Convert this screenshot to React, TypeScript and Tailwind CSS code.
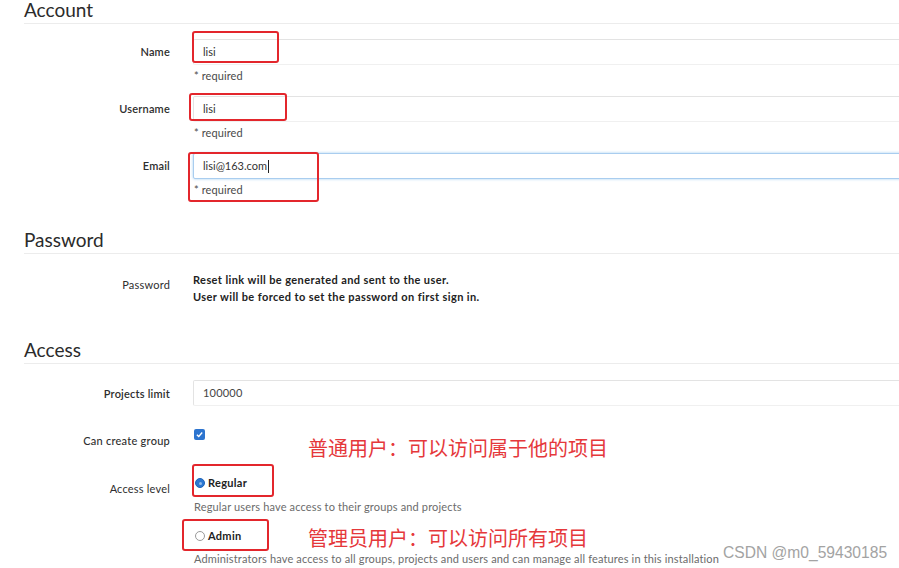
import React from 'react'

const labelCls = 'w-[146px] shrink-0 text-right text-[11px] leading-[16px] text-[#2e2e2e]'

function Heading({ title, className = '' }: { title: string; className?: string }) {
  return (
    <h3
      className={`pb-[3px] border-b border-[#ececec] text-[19px] leading-[20px] font-normal text-[#2b2b2b] ${className}`}
    >
      {title}
    </h3>
  )
}

function TextRow({
  label,
  value,
  focused = false,
  className = '',
}: {
  label: string
  value: string
  focused?: boolean
  className?: string
}) {
  return (
    <div className={`flex ${className}`}>
      <label className={`${labelCls} pt-[5px] font-semibold tracking-[0.2px]`}>{label}</label>
      <div className="flex-1 pl-[23px]">
        <div
          className={`h-[26px] flex items-center pl-[9px] rounded-[2px] bg-white text-[11px] text-[#333] ${
            focused
              ? 'border border-[#a9cdef] shadow-[0_0_3px_rgba(102,175,233,0.6)]'
              : 'border border-[#e3e3e3] border-b-[#f0f0f0]'
          }`}
        >
          {value}
          {focused && <span className="ml-[1px] inline-block w-px h-[13px] bg-[#222]" />}
        </div>
        <div className="mt-[4px] pl-[1px] text-[11px] leading-[14px] tracking-[0.1px] text-[#4a4a4a]">* required</div>
      </div>
    </div>
  )
}

function Radio({ checked }: { checked: boolean }) {
  return checked ? (
    <span className="inline-flex w-[10px] h-[10px] rounded-full bg-[#2c77d1] border border-[#1f64b8] items-center justify-center">
      <span className="w-[3px] h-[3px] rounded-full bg-[#8fb9ea]" />
    </span>
  ) : (
    <span className="inline-block w-[10px] h-[10px] rounded-full border border-[#9a9a9a] bg-white" />
  )
}

export default function App() {
  return (
    <div className="relative w-[899px] h-[568px] overflow-hidden bg-white font-['Lato','Liberation_Sans',sans-serif]">
      <div className="w-[980px] pl-[24px] pt-[1px]">
        {/* Account */}
        <Heading title="Account" className="-mt-[1px]" />
        <TextRow label="Name" value="lisi" className="mt-[15px]" />
        <TextRow label="Username" value="lisi" className="mt-[13px]" />
        <TextRow label="Email" value="lisi@163.com" focused className="mt-[13px]" />

        {/* Password */}
        <Heading title="Password" className="mt-[33px]" />
        <div className="flex mt-[18px]">
          <label className={`${labelCls} pt-[5px] tracking-[0.2px]`}>Password</label>
          <div className="pl-[23px] text-[11px] leading-[16.5px] font-bold tracking-[0.4px] text-[#222]">
            <p>Reset link will be generated and sent to the user.</p>
            <p>User will be forced to set the password on first sign in.</p>
          </div>
        </div>

        {/* Access */}
        <Heading title="Access" className="mt-[35px]" />
        <div className="flex mt-[16px]">
          <label className={`${labelCls} pt-[6px] font-semibold tracking-[0.2px]`}>Projects limit</label>
          <div className="flex-1 pl-[23px]">
            <div className="h-[26px] flex items-center pl-[9px] rounded-[2px] border border-[#e3e3e3] border-b-[#f0f0f0] bg-white text-[11px] tracking-[0.2px] text-[#444]">
              100000
            </div>
          </div>
        </div>

        <div className="flex mt-[14px]">
          <label className={`${labelCls} pt-[13px] font-medium tracking-[0.25px]`}>Can create group</label>
          <div className="pl-[24px] pt-[9px]">
            <span className="flex w-[11px] h-[11px] rounded-[2px] bg-[#2c74cf] items-center justify-center">
              <svg viewBox="0 0 12 12" className="w-[9px] h-[9px]">
                <path d="M2.5 6.2 L5 8.6 L9.6 3.4" fill="none" stroke="#fff" strokeWidth="1.8" />
              </svg>
            </span>
          </div>
        </div>

        <div className="flex mt-[25px]">
          <label className={`${labelCls} pt-[7px] tracking-[0.2px]`}>Access level</label>
          <div className="pl-[24px]">
            <div className="flex items-center h-[18px] gap-[3px] pl-[1px]">
              <Radio checked />
              <span className="text-[11px] font-bold tracking-[0.3px] text-[#222]">Regular</span>
            </div>
            <div className="mt-[8px] text-[11px] leading-[14px] tracking-[0.15px] text-[#6b6b6b]">
              Regular users have access to their groups and projects
            </div>
            <div className="mt-[13px] flex items-center h-[18px] gap-[3px] pl-[1px]">
              <Radio checked={false} />
              <span className="text-[11px] font-bold tracking-[0.3px] text-[#222]">Admin</span>
            </div>
            <div className="mt-[7px] text-[11px] leading-[14px] tracking-[0.15px] text-[#6b6b6b] whitespace-nowrap">
              Administrators have access to all groups, projects and users and can manage all features in this installation
            </div>
          </div>
        </div>
      </div>

      {/* annotations */}
      <div className="absolute left-[192px] top-[31px] w-[87px] h-[32px] border-[2.5px] border-[#e3262c] rounded-[3px]" />
      <div className="absolute left-[189px] top-[93px] w-[98px] h-[28px] border-[2.5px] border-[#e3262c] rounded-[3px]" />
      <div className="absolute left-[188px] top-[152px] w-[131px] h-[50px] border-[2.5px] border-[#e3262c] rounded-[3px]" />
      <div className="absolute left-[192px] top-[464px] w-[82px] h-[33px] border-[2.5px] border-[#e3262c] rounded-[3px]" />
      <div className="absolute left-[182px] top-[519px] w-[87px] h-[32px] border-[2.5px] border-[#e3262c] rounded-[3px]" />

      <div className="absolute left-[308px] top-[436px] text-[20px] leading-[24px] text-[#e5383b] font-['Noto_Sans_CJK_SC',sans-serif]">
        普通用户：可以访问属于他的项目
      </div>
      <div className="absolute left-[308px] top-[526px] text-[20px] leading-[24px] text-[#e5383b] font-['Noto_Sans_CJK_SC',sans-serif]">
        管理员用户：可以访问所有项目
      </div>

      <div className="absolute left-[723px] top-[543px] text-[15.6px] leading-[20px] text-[#a3a3a3] font-['Liberation_Sans',sans-serif]">
        CSDN @m0_59430185
      </div>
    </div>
  )
}
